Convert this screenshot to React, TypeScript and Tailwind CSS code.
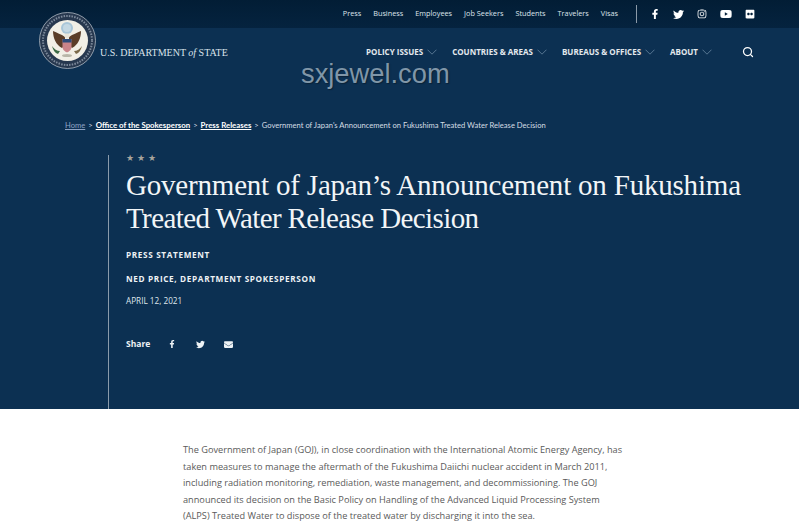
import { FaFacebookF, FaTwitter, FaInstagram, FaYoutube, FaFlickr, FaEnvelope } from 'react-icons/fa';
import { Search } from 'lucide-react';

const topLinks = ['Press', 'Business', 'Employees', 'Job Seekers', 'Students', 'Travelers', 'Visas'];
const navLinks = ['POLICY ISSUES', 'COUNTRIES & AREAS', 'BUREAUS & OFFICES', 'ABOUT'];

function Chevron() {
  return (
    <svg width="10" height="6" viewBox="0 0 10 6" fill="none" stroke="#5f7d99" strokeWidth="0.9">
      <path d="M0.5 0.7 5 5.2 9.5 0.7" />
    </svg>
  );
}

function Seal() {
  return (
    <svg width="57" height="57" viewBox="0 0 57 57" className="absolute left-[39px] top-[12px]">
      <circle cx="28.5" cy="28.5" r="28" fill="#27384f" stroke="#aeb8c2" strokeWidth="0.8" />
      <circle cx="28.5" cy="28.5" r="24.5" fill="none" stroke="#7d8a9b" strokeWidth="2" strokeDasharray="1.5 1.2" />
      <circle cx="28.5" cy="28.5" r="20.5" fill="#f1efe6" />
      <circle cx="28" cy="16" r="6" fill="#a9c6d8" />
      <circle cx="28" cy="16" r="4" fill="#c4d8e3" />
      <path d="M26 25 C22 22 18 21 14 19 C14 26 17 33 23 36 L26 33 Z" fill="#5a3d28" />
      <path d="M30 25 C34 22 38 21 42 19 C42 26 39 33 33 36 L30 33 Z" fill="#5a3d28" />
      <circle cx="28" cy="24" r="2.5" fill="#e8e4d8" />
      <path d="M23.5 27 H32.5 V35 C32.5 38 30 39.5 28 40.5 C26 39.5 23.5 38 23.5 35 Z" fill="#c9848a" />
      <rect x="23.5" y="27" width="9" height="3.5" fill="#2c4a78" />
      <path d="M13 34 C15 37 18 39 21 39 L19 42 C16 41 14 38 13 34 Z" fill="#3d6b45" />
      <path d="M43 34 C41 37 38 39 35 39 L37 42 C40 41 42 38 43 34 Z" fill="#7a6a4a" />
      <ellipse cx="28" cy="43.5" rx="5" ry="1.6" fill="#b8b6a8" />
    </svg>
  );
}

export default function App() {
  return (
    <div className="relative h-[530px] w-[799px] overflow-hidden bg-white font-['Open_Sans',sans-serif]">
      <div className="relative h-[409px] bg-[#0c3052] text-white">
        {/* top bar */}
        <div className="flex h-[28px] items-center justify-end bg-gradient-to-b from-[#021d35] to-[#05233f] pr-[44px]">
          <ul className="mb-[2px] flex gap-[12px] text-[7.3px] text-[#dfe6ec]">
            {topLinks.map((l) => (
              <li key={l}>{l}</li>
            ))}
          </ul>
          <div className="ml-[18px] mr-[13px] h-[18px] w-px bg-[#8b9aa8]" />
          <div className="flex items-center gap-[13px] text-[10px] text-white">
            <FaFacebookF size={10} />
            <FaTwitter size={11} />
            <FaInstagram size={10} />
            <FaYoutube size={12} />
            <FaFlickr size={10} />
          </div>
        </div>

        {/* main nav */}
        <div className="flex h-[49px] items-center pl-[100px] pr-[45px]">
          <div className="font-['Liberation_Serif',serif] text-[10px] text-[#dbe3ea]">
            U.S. DEPARTMENT <i>of</i> STATE
          </div>
          <ul className="mb-[2px] ml-auto flex items-center text-[8px] font-bold text-[#e4e9ee]">
            {navLinks.map((l) => (
              <li key={l} className="mr-[15px] flex items-center gap-[4px]">
                {l}
                <Chevron />
              </li>
            ))}
          </ul>
          <Search size={12} strokeWidth={2.5} className="mb-[2px] ml-[15px] text-white" />
        </div>
        <Seal />

        {/* breadcrumb */}
        <div className="mt-[40px] flex items-center gap-[3px] pl-[65px] font-['Lato',sans-serif] text-[7.6px] leading-[16px] text-[#d5dde4]">
          <span className="text-[#8ea3c4] underline">Home</span>
          <span>&gt;</span>
          <span className="text-[7.85px] font-bold text-white underline">Office of the Spokesperson</span>
          <span>&gt;</span>
          <span className="text-[7.85px] font-bold text-white underline">Press Releases</span>
          <span>&gt;</span>
          <span>Government of Japan's Announcement on Fukushima Treated Water Release Decision</span>
        </div>

        {/* title block */}
        <div className="ml-[108px] mt-[22px] h-[254px] border-l border-[#8a9bab] pl-[17px]">
          <div className="flex h-[6px] items-center gap-[3px] text-[9px] leading-[6px] text-[#a8a49c]">
            <span>★</span>
            <span>★</span>
            <span>★</span>
          </div>
          <h1 className="mt-[8px] font-['Liberation_Serif',serif] text-[29px] leading-[33px] text-[#f2f5f7]">
            <span className="tracking-[-0.2px]">Government of Japan’s Announcement on Fukushima</span>
            <br />
            <span className="tracking-[-0.6px]">Treated Water Release Decision</span>
          </h1>
          <div className="mt-[14px] text-[8.2px] font-bold leading-[12px] tracking-[0.65px] text-[#eef2f5]">PRESS STATEMENT</div>
          <div className="mt-[12px] text-[8.2px] font-bold leading-[12px] tracking-[0.65px] text-[#eef2f5]">
            NED PRICE, DEPARTMENT SPOKESPERSON
          </div>
          <div className="mt-[10px] text-[8.2px] leading-[12px] text-[#dfe6ec]">APRIL 12, 2021</div>
          <div className="mt-[31px] flex items-center text-[8.5px] font-bold leading-[12px] text-[#eef2f5]">
            <span className="w-[42px]">Share</span>
            <FaFacebookF size={8} />
            <FaTwitter size={9} className="ml-[20px]" />
            <FaEnvelope size={9} className="ml-[19px]" />
          </div>
        </div>
      </div>

      {/* body */}
      <div className="ml-[183px] mt-[33px] w-[440px] text-[9.2px] leading-[16.5px] text-[#5a5a5a]">
        The Government of Japan (GOJ), in close coordination with the International Atomic Energy Agency, has taken
        measures to manage the aftermath of the Fukushima Daiichi nuclear accident in March 2011, including radiation
        monitoring, remediation, waste management, and decommissioning. The GOJ announced its decision on the Basic
        Policy on Handling of the Advanced Liquid Processing System (ALPS) Treated Water to dispose of the treated water
        by discharging it into the sea.
      </div>

      {/* watermark over the page */}
      <div className="absolute left-[301px] top-[59px] font-['Liberation_Sans',sans-serif] text-[27.3px] leading-[30px] text-[#8096a8] [text-shadow:1px_1px_1px_#0a2238]">
        sxjewel.com
      </div>
    </div>
  );
}
